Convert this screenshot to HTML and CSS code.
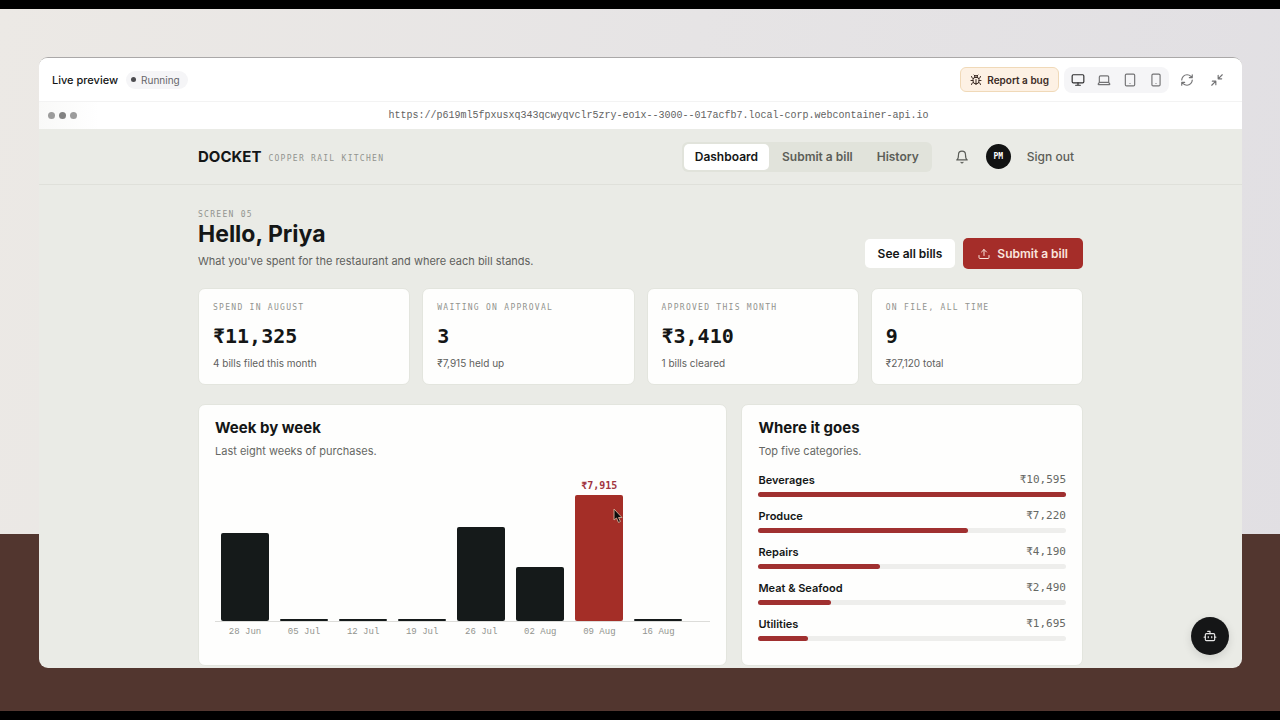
FILE: index.html
```html
<!DOCTYPE html>
<html lang="en">
<head>
<meta charset="utf-8">
<meta name="viewport" content="width=device-width, initial-scale=1">
<title>Docket – Live preview</title>
<link rel="stylesheet" href="styles.css">
</head>
<body>
<div class="stage">
  <div class="window">
    <header class="toolbar">
      <h2 class="toolbar-title">Live preview</h2>
      <span class="status"><span class="status-dot"></span>Running</span>
      <div class="toolbar-actions">
        <button class="report" type="button">
          <svg class="icon" viewBox="0 0 24 24"><path d="M8 2l2 2M14 4l2-2M9 7V6a3 3 0 0 1 6 0v1M12 20a6 6 0 0 1-6-6v-3a4 4 0 0 1 4-4h4a4 4 0 0 1 4 4v3a6 6 0 0 1-6 6zM12 20v-9M6.500 9C4.600 8.800 3 7.100 3 5M6 13H2M3 21c0-2.100 1.700-3.900 3.800-4M21 5c0 2.100-1.600 3.800-3.500 4M22 13h-4M17.200 17c2.100.1 3.800 1.900 3.800 4"/></svg>
          Report a bug
        </button>
        <div class="devices">
          <button class="icon-button active" type="button" aria-label="Desktop"><svg class="icon" viewBox="0 0 24 24"><rect x="2" y="3" width="20" height="14" rx="2"/><path d="M8 21h8M12 17v4"/></svg></button>
          <button class="icon-button" type="button" aria-label="Laptop"><svg class="icon" viewBox="0 0 24 24"><path d="M4 16V7a2 2 0 0 1 2-2h12a2 2 0 0 1 2 2v9M4 16h16l2 3a1 1 0 0 1-1 1H3a1 1 0 0 1-1-1z"/></svg></button>
          <button class="icon-button" type="button" aria-label="Tablet"><svg class="icon" viewBox="0 0 24 24"><rect x="4" y="2" width="16" height="20" rx="2"/><path d="M12 18h.01"/></svg></button>
          <button class="icon-button" type="button" aria-label="Phone"><svg class="icon" viewBox="0 0 24 24"><rect x="5" y="2" width="14" height="20" rx="2"/><path d="M12 18h.01"/></svg></button>
        </div>
        <button class="icon-button" type="button" aria-label="Reload"><svg class="icon" viewBox="0 0 24 24"><path d="M3 12a9 9 0 0 1 9-9 9.750 9.750 0 0 1 6.740 2.740L21 8M21 3v5h-5M21 12a9 9 0 0 1-9 9 9.750 9.750 0 0 1-6.740-2.740L3 16M8 16H3v5"/></svg></button>
        <button class="icon-button" type="button" aria-label="Minimize"><svg class="icon" viewBox="0 0 24 24"><path d="M4 14h6v6M20 10h-6V4M14 10l7-7M3 21l7-7"/></svg></button>
      </div>
    </header>

    <div class="address-bar">
      <span class="dots"><i></i><i></i><i></i></span>
      <span class="address">https://p619ml5fpxusxq343qcwyqvclr5zry-eo1x--3000--017acfb7.local-corp.webcontainer-api.io</span>
    </div>

    <div class="app-header">
      <div class="container app-header-row">
        <span class="brand">DOCKET</span>
        <span class="eyebrow brand-sub">COPPER RAIL KITCHEN</span>
        <nav class="tabs">
          <a class="tab current" href="#">Dashboard</a>
          <a class="tab" href="#">Submit a bill</a>
          <a class="tab" href="#">History</a>
        </nav>
        <button class="bell" type="button" aria-label="Notifications"><svg class="icon" viewBox="0 0 24 24"><path d="M6 8a6 6 0 0 1 12 0c0 7 3 9 3 9H3s3-2 3-9M10.300 21a1.940 1.940 0 0 0 3.400 0"/></svg></button>
        <span class="avatar">PM</span>
        <button class="sign-out" type="button">Sign out</button>
      </div>
    </div>

    <main class="container main">
      <div class="intro">
        <div>
          <p class="eyebrow">SCREEN 05</p>
          <h1 class="greeting">Hello, Priya</h1>
          <p class="lead">What you've spent for the restaurant and where each bill stands.</p>
        </div>
        <div class="intro-actions">
          <button class="button" type="button">See all bills</button>
          <button class="button primary" type="button">
            <svg class="icon" viewBox="0 0 24 24"><path d="M12 15V3M7 8l5-5 5 5M2 15v4a2 2 0 0 0 2 2h16a2 2 0 0 0 2-2v-4"/></svg>
            Submit a bill
          </button>
        </div>
      </div>

      <section class="stats">
        <article class="card stat"><p class="eyebrow">SPEND IN AUGUST</p><p class="stat-value">₹11,325</p><p class="stat-note">4 bills filed this month</p></article>
        <article class="card stat"><p class="eyebrow">WAITING ON APPROVAL</p><p class="stat-value">3</p><p class="stat-note">₹7,915 held up</p></article>
        <article class="card stat"><p class="eyebrow">APPROVED THIS MONTH</p><p class="stat-value">₹3,410</p><p class="stat-note">1 bills cleared</p></article>
        <article class="card stat"><p class="eyebrow">ON FILE, ALL TIME</p><p class="stat-value">9</p><p class="stat-note">₹27,120 total</p></article>
      </section>

      <section class="panels">
        <article class="card panel">
          <h2 class="panel-title">Week by week</h2>
          <p class="panel-sub">Last eight weeks of purchases.</p>
          <div class="bars">
            <div class="bar" style="height:70%"></div>
            <div class="bar" style="height:2px"></div>
            <div class="bar" style="height:2px"></div>
            <div class="bar" style="height:2px"></div>
            <div class="bar" style="height:75%"></div>
            <div class="bar" style="height:43%"></div>
            <div class="bar peak" style="height:100%"><span class="bar-value">₹7,915</span></div>
            <div class="bar" style="height:2px"></div>
          </div>
          <div class="bar-labels">
            <span>28 Jun</span><span>05 Jul</span><span>12 Jul</span><span>19 Jul</span><span>26 Jul</span><span>02 Aug</span><span>09 Aug</span><span>16 Aug</span>
          </div>
        </article>

        <article class="card panel">
          <h2 class="panel-title">Where it goes</h2>
          <p class="panel-sub">Top five categories.</p>
          <ul class="categories">
            <li><span class="row"><b>Beverages</b><span class="amount">₹10,595</span></span><span class="track"><span class="fill" style="width:100%"></span></span></li>
            <li><span class="row"><b>Produce</b><span class="amount">₹7,220</span></span><span class="track"><span class="fill" style="width:68.100%"></span></span></li>
            <li><span class="row"><b>Repairs</b><span class="amount">₹4,190</span></span><span class="track"><span class="fill" style="width:39.500%"></span></span></li>
            <li><span class="row"><b>Meat &amp; Seafood</b><span class="amount">₹2,490</span></span><span class="track"><span class="fill" style="width:23.500%"></span></span></li>
            <li><span class="row"><b>Utilities</b><span class="amount">₹1,695</span></span><span class="track"><span class="fill" style="width:16%"></span></span></li>
          </ul>
        </article>
      </section>
    </main>

    <button class="assistant" type="button" aria-label="Assistant"><svg class="icon" viewBox="0 0 24 24"><path d="M12 8V4H8M2 14h2M20 14h2M15 13v2M9 13v2"/><rect x="4" y="8" width="16" height="12" rx="2"/></svg></button>
  </div>
</div>
<svg class="pointer" viewBox="0 0 10 16"><path d="M1 1v11l2.500-2 2 4.500 2-1-2-4H9z"/></svg>
</body>
</html>
```
FILE: styles.css
```css
* { box-sizing: border-box; margin: 0; padding: 0; }

body {
  height: 100vh;
  padding: 9px 0;
  overflow: hidden;
  background: #000;
  color: #141616;
  font-family: Inter, "Liberation Sans", sans-serif;
  font-size: 11px;
  line-height: 16px;
}

button { border: 0; background: none; color: inherit; font: inherit; cursor: pointer; }
a { color: inherit; text-decoration: none; }

.icon {
  display: block;
  width: 14px;
  height: 14px;
  fill: none;
  stroke: currentColor;
  stroke-width: 2;
  stroke-linecap: round;
  stroke-linejoin: round;
}

.stage {
  height: 100%;
  padding: 48px 38px 43px 39px;
  background:
    linear-gradient(#52362f, #52362f) bottom / 100% 177px no-repeat,
    linear-gradient(100deg, #ece9e5, #e6e4e5 50%, #e1dfe3);
}

.window {
  position: relative;
  height: 100%;
  overflow: hidden;
  border-top: 1px solid #aaa8a8;
  border-radius: 9px;
  background: #eaebe6;
}

/* Preview toolbar */
.toolbar {
  display: flex;
  align-items: center;
  height: 44px;
  padding: 0 13px;
  border-bottom: 1px solid #f3f3f3;
  background: #fff;
}
.toolbar-title { font-size: 11px; font-weight: 500; }
.status {
  display: flex;
  align-items: center;
  gap: 5px;
  height: 18px;
  margin-left: 8px;
  padding: 0 8px 0 5px;
  border-radius: 9px;
  background: #f5f5f7;
  color: #66666a;
  font-size: 10px;
}
.status-dot { width: 5px; height: 5px; border-radius: 50%; background: #4c4c50; }
.toolbar-actions { display: flex; align-items: center; gap: 5px; margin-left: auto; }
.report {
  display: flex;
  align-items: center;
  gap: 5px;
  height: 25px;
  padding: 0 9px;
  border: 1px solid #f0d9b8;
  border-radius: 6px;
  background: #fdf1e4;
  color: #3b2b24;
  font-size: 10px;
  font-weight: 600;
}
.report .icon { width: 12px; height: 12px; }
.devices { display: flex; gap: 1px; padding: 1px; border-radius: 8px; background: #f5f5f7; }
.icon-button {
  display: grid;
  place-items: center;
  width: 25px;
  height: 24px;
  color: #737375;
}
.icon-button.active { color: #2c2c2e; }

.address-bar {
  display: flex;
  align-items: center;
  height: 27px;
  padding: 0 2px 0 9px;
  background: linear-gradient(90deg, #f9f9f8, #fff 60px);
}
.dots { display: flex; gap: 4px; }
.dots i { width: 7px; height: 7px; border-radius: 50%; background: #9c9c9c; }
.dots i:nth-child(2) { background: #828282; }
.address {
  flex: 1;
  color: #626262;
  font: 10px/14px "Liberation Mono", monospace;
  text-align: center;
}

/* Docket app */
.container { width: 100%; max-width: 925px; margin: 0 auto; padding: 0 20px; }
.app-header { border-bottom: 1px solid #dfe0da; }
.app-header-row { display: flex; align-items: center; height: 55px; }
.brand { font-size: 15px; font-weight: 700; }
.eyebrow {
  color: #92948f;
  font: 8px/10px "DejaVu Sans Mono", monospace;
  letter-spacing: 0.16em;
}
.brand-sub { padding: 4px 0 0 7px; }
.tabs {
  display: flex;
  gap: 2px;
  margin-left: auto;
  padding: 2px;
  border-radius: 6px;
  background: #e1e3db;
}
.tab { padding: 5px 11px; border-radius: 5px; color: #5c5e58; font-size: 12px; font-weight: 600; }
.tab.current { background: #fff; color: #141616; }
.bell { margin-left: 23px; color: #5a5c57; }
.avatar {
  display: grid;
  place-items: center;
  width: 25px;
  height: 25px;
  margin-left: 17px;
  border-radius: 50%;
  background: #121313;
  color: #fff;
  font: bold 8px/12px "DejaVu Sans Mono", monospace;
}
.sign-out { padding: 0 9px 0 16px; color: #5c5e58; font-size: 12px; font-weight: 500; }

.main { padding-top: 25px; }
.intro { display: flex; align-items: flex-end; justify-content: space-between; }
.greeting { font-size: 23px; font-weight: 700; line-height: 28px; }
.lead { margin-top: 5px; color: #5f615d; }
.intro-actions { display: flex; align-items: center; gap: 8px; }
.button {
  display: flex;
  align-items: center;
  gap: 7px;
  height: 29px;
  padding: 0 13px;
  border-radius: 5px;
  background: #fff;
  font-size: 12px;
  font-weight: 600;
}
.button.primary { height: 31px; padding: 0 15px; background: #a52d29; color: #fae4dc; }
.button.primary .icon { width: 12px; height: 12px; }

.card { border: 1px solid #e3e5de; border-radius: 7px; background: #fefefd; }
.stats { display: grid; grid-template-columns: repeat(4, 1fr); gap: 12px; margin-top: 19px; }
.stat { padding: 14px; }
.stat-value { margin-top: 10px; font: bold 20px/26px "DejaVu Sans Mono", monospace; }
.stat-note { margin-top: 7px; color: #5f615d; font-size: 10px; line-height: 14px; }

.panels { display: grid; grid-template-columns: 155fr 100fr; gap: 14px; margin-top: 19px; }
.panel { padding: 14px 16px 24px; }
.panel-title { font-size: 15px; font-weight: 700; line-height: 18px; }
.panel-sub { margin-top: 6px; color: #666864; }

.bars {
  display: grid;
  grid-template-columns: repeat(8, 1fr);
  align-items: end;
  gap: 11px;
  height: 127px;
  margin-top: 36px;
  padding: 0 28px 0 6px;
  border-bottom: 1px solid #dcdcd9;
}
.bar { position: relative; border-radius: 2px; background: #151a1a; }
.bar.peak { background: #a42e27; }
.bar-value {
  position: absolute;
  right: 0;
  bottom: 100%;
  left: 0;
  color: #a23540;
  font: bold 10px/18px "DejaVu Sans Mono", monospace;
  text-align: center;
}
.bar-labels {
  display: grid;
  grid-template-columns: repeat(8, 1fr);
  gap: 11px;
  margin-top: 4px;
  padding: 0 28px 0 6px;
  color: #92948f;
  font: 9px/12px "Liberation Mono", monospace;
  text-align: center;
}

.categories { display: grid; gap: 11px; margin-top: 13px; list-style: none; }
.row { display: flex; justify-content: space-between; margin-bottom: 4px; }
.row b { font-weight: 600; }
.amount { color: #666864; font: 11px/16px "DejaVu Sans Mono", monospace; }
.track { display: block; height: 5px; border-radius: 3px; background: #eeeeec; }
.fill { display: block; height: 100%; border-radius: 3px; background: #a03030; }

.assistant {
  position: absolute;
  right: 13px;
  bottom: 13px;
  display: grid;
  place-items: center;
  width: 38px;
  height: 38px;
  border-radius: 50%;
  background: #151617;
  color: #e6e6e6;
  box-shadow: 0 3px 10px rgba(0, 0, 0, 0.12);
}

.pointer {
  position: absolute;
  left: 613px;
  top: 508px;
  width: 10px;
  height: 16px;
  fill: #0c0c0c;
  stroke: #c9a08c;
  stroke-width: 1;
}
```
